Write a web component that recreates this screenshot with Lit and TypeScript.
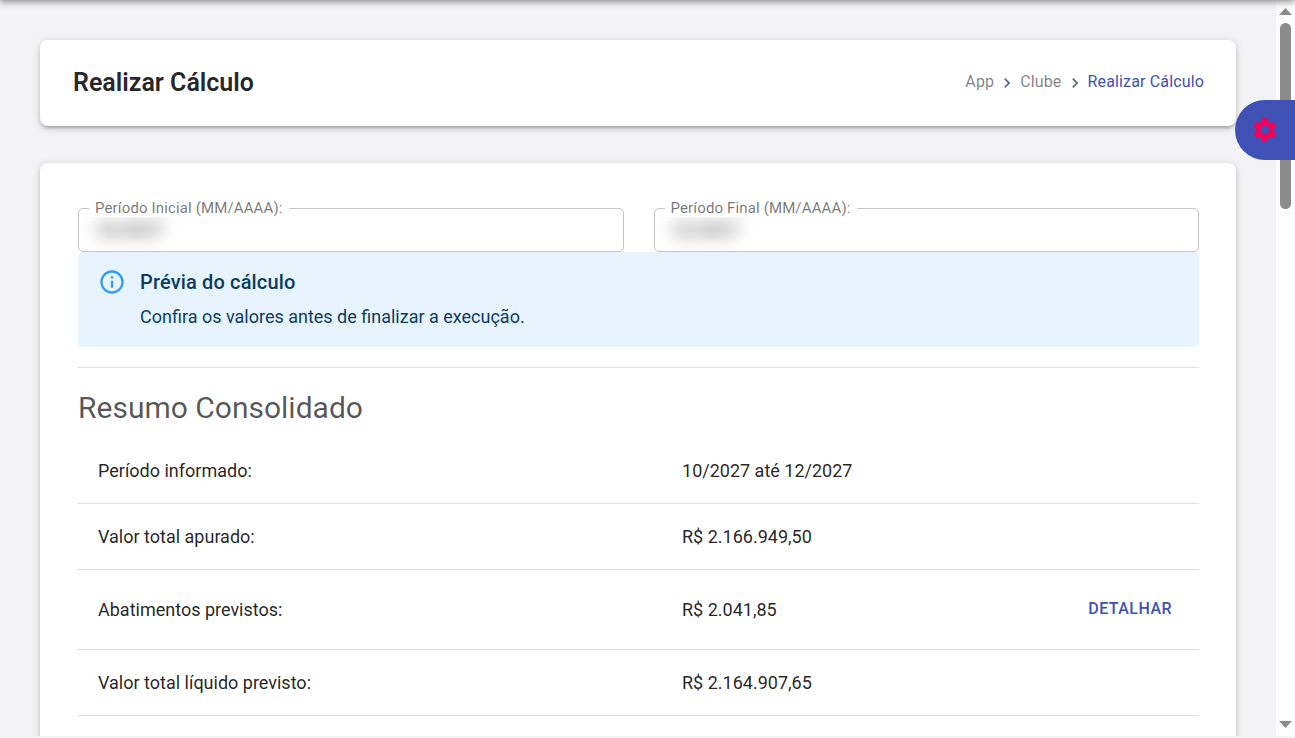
import { LitElement, html, css, nothing } from "lit";
import { customElement } from "lit/decorators.js";

interface SummaryRow {
  label: string;
  value: string;
  action?: string;
}

const ROWS: SummaryRow[] = [
  { label: "Período informado:", value: "10/2027 até 12/2027" },
  { label: "Valor total apurado:", value: "R$ 2.166.949,50" },
  { label: "Abatimentos previstos:", value: "R$ 2.041,85", action: "Detalhar" },
  { label: "Valor total líquido previsto:", value: "R$ 2.164.907,65" },
];

@customElement("app-root")
export class AppRoot extends LitElement {
  static styles = css`
    :host {
      display: block;
      position: relative;
      height: 100vh;
      overflow: hidden;
      box-sizing: border-box;
      padding-bottom: 2px;
      background: #f3f3f4;
      color: rgba(0, 0, 0, 0.87);
      font-family: Roboto, "Liberation Sans", sans-serif;
      font-size: 18px;
      line-height: 26px;
    }
    .topbar {
      position: absolute;
      left: 0;
      right: 0;
      bottom: 100%;
      height: 64px;
      z-index: 2;
      box-shadow: 0 2px 4px -1px rgba(0, 0, 0, 0.2), 0 4px 5px 0 rgba(0, 0, 0, 0.14),
        0 1px 10px 0 rgba(0, 0, 0, 0.12);
    }
    .shell {
      display: grid;
      grid-template-columns: minmax(0, 1fr) 19px;
      height: 100%;
    }
    .content {
      display: flex;
      flex-direction: column;
      gap: 37px;
      padding: 40px 40px 0;
      overflow: hidden;
      background: #f3f3f6;
    }
    .card {
      flex: none;
      background: #fff;
      border-radius: 8px;
      box-shadow: 0 3px 3px -2px rgba(0, 0, 0, 0.2), 0 3px 4px 0 rgba(0, 0, 0, 0.14),
        0 1px 8px 0 rgba(0, 0, 0, 0.12);
    }
    .header {
      display: flex;
      align-items: center;
      justify-content: space-between;
      padding: 28px 32px 28px 33px;
    }
    h1,
    h2,
    h3,
    p {
      margin: 0;
    }
    h1 {
      font-size: 25px;
      line-height: 30px;
      font-weight: 600;
    }
    .crumbs {
      display: flex;
      align-items: center;
      padding-bottom: 2px;
      font-size: 16px;
      line-height: 24px;
      letter-spacing: 0.00938em;
      gap: 3px;
    }
    .crumbs a {
      color: rgba(0, 0, 0, 0.5);
      text-decoration: none;
    }
    .crumbs .current {
      color: #3f51b5;
    }
    .crumbs svg {
      width: 20px;
      height: 20px;
      margin-top: 2px;
      fill: #5f6b72;
    }
    .panel {
      padding: 45px 37px 80px 38px;
    }
    .fields {
      display: grid;
      grid-template-columns: 1fr 1fr;
      gap: 30px;
    }
    .field {
      position: relative;
      display: flex;
      height: 42px;
      border: 1px solid #c4c4c4;
      border-radius: 5px;
    }
    .field label {
      position: absolute;
      z-index: 1;
      top: -10px;
      left: 10px;
      padding: 0 6px;
      background: #fff;
      color: rgba(0, 0, 0, 0.54);
      font-size: 15px;
      line-height: 18px;
      letter-spacing: 0.00938em;
    }
    .field input {
      flex: 1;
      min-width: 0;
      padding: 0 16px;
      border: 0;
      outline: 0;
      background: transparent;
      color: rgba(0, 0, 0, 0.87);
      font: inherit;
      filter: blur(8px);
    }
    .alert {
      display: flex;
      gap: 14px;
      padding: 17px 20px;
      background: #e7f3fd;
      border-radius: 5px;
      color: #0d3c61;
    }
    .alert svg {
      flex: none;
      width: 28px;
      height: 28px;
      margin-top: -1px;
      fill: #2f9bf4;
    }
    .alert h3 {
      font-size: 20px;
      line-height: 26px;
      font-weight: 500;
      letter-spacing: 0.0075em;
    }
    .alert p {
      margin-top: 9px;
    }
    .divider {
      height: 1px;
      margin: 20px 0;
      border: 0;
      background: #e0e0e0;
    }
    h2 {
      color: rgba(0, 0, 0, 0.66);
      font-size: 30px;
      line-height: 40px;
      font-weight: 400;
    }
    table {
      width: 100%;
      margin-top: 10px;
      border-collapse: separate;
      border-spacing: 0;
      table-layout: fixed;
    }
    .label-col {
      width: 52.1%;
    }
    .value-col {
      width: 30%;
    }
    th,
    td {
      height: 25px;
      padding: 20px;
      border-bottom: 1px solid #e0e0e0;
      font-weight: 400;
      line-height: 25px;
      text-align: left;
      vertical-align: middle;
    }
    .action {
      text-align: right;
      line-height: 0;
    }
    .text-button {
      padding: 5px 7px 7px;
      border: 0;
      border-radius: 4px;
      background: none;
      color: #3f51b5;
      font: 500 16px/27px Roboto, "Liberation Sans", sans-serif;
      letter-spacing: 0.02857em;
      text-transform: uppercase;
      vertical-align: middle;
      cursor: pointer;
    }
    .scrollbar {
      display: flex;
      flex-direction: column;
      align-items: center;
      padding: 8px 0;
      background: #fcfcfc;
    }
    .scrollbar svg {
      flex: none;
      width: 13px;
      height: 7px;
      fill: #8b8b8b;
    }
    .track {
      flex: 1;
      width: 11px;
      padding: 8px 0;
    }
    .thumb {
      height: 27%;
      border-radius: 6px;
      background: #8b8b8b;
    }
    .settings {
      position: absolute;
      z-index: 3;
      top: 100px;
      right: 0;
      display: flex;
      align-items: center;
      justify-content: center;
      width: 60px;
      height: 60px;
      padding: 0;
      border: 0;
      border-radius: 30px 0 0 30px;
      background: #3f51b5;
      cursor: pointer;
    }
    .settings svg {
      width: 28px;
      height: 28px;
      fill: #f50057;
    }
  `;

  private chevron() {
    return html`<svg viewBox="0 0 24 24" aria-hidden="true">
      <path d="M10 6L8.59 7.41 13.17 12l-4.58 4.59L10 18l6-6z" />
    </svg>`;
  }

  private field(id: string, label: string, value: string) {
    return html`<div class="field">
      <label for=${id}>${label}</label>
      <input id=${id} type="text" .value=${value} />
    </div>`;
  }

  render() {
    return html`
      <div class="topbar"></div>
      <div class="shell">
        <main class="content">
          <header class="card header">
            <h1>Realizar Cálculo</h1>
            <nav class="crumbs" aria-label="breadcrumb">
              <a href="#">App</a>${this.chevron()}<a href="#">Clube</a>${this.chevron()}<a class="current" href="#">Realizar Cálculo</a>
            </nav>
          </header>
          <section class="card panel">
            <div class="fields">
              ${this.field("inicio", "Período Inicial (MM/AAAA):", "10/2027")}
              ${this.field("fim", "Período Final (MM/AAAA):", "12/2027")}
            </div>
            <div class="alert" role="status">
              <svg viewBox="0 0 24 24" aria-hidden="true">
                <path d="M11 7h2v2h-2zm0 4h2v6h-2zM12 2C6.48 2 2 6.48 2 12s4.48 10 10 10 10-4.48 10-10S17.52 2 12 2zm0 18c-4.41 0-8-3.59-8-8s3.59-8 8-8 8 3.59 8 8-3.59 8-8 8z" />
              </svg>
              <div>
                <h3>Prévia do cálculo</h3>
                <p>Confira os valores antes de finalizar a execução.</p>
              </div>
            </div>
            <hr class="divider" />
            <h2>Resumo Consolidado</h2>
            <table>
              <colgroup>
                <col class="label-col" />
                <col class="value-col" />
                <col />
              </colgroup>
              <tbody>
                ${ROWS.map(
                  (row) => html`<tr>
                    <th scope="row">${row.label}</th>
                    <td>${row.value}</td>
                    <td class="action">
                      ${row.action ? html`<button class="text-button" type="button">${row.action}</button>` : nothing}
                    </td>
                  </tr>`
                )}
              </tbody>
            </table>
          </section>
        </main>
        <div class="scrollbar" aria-hidden="true">
          <svg viewBox="0 0 13 7"><path d="M0 7L6.5 0 13 7z" /></svg>
          <div class="track"><div class="thumb"></div></div>
          <svg viewBox="0 0 13 7"><path d="M0 0L6.5 7 13 0z" /></svg>
        </div>
      </div>
      <button class="settings" type="button" aria-label="Configurações">
        <svg viewBox="0 0 24 24" aria-hidden="true">
          <path d="M19.43 12.98c.04-.32.07-.64.07-.98s-.03-.66-.07-.98l2.11-1.65c.19-.15.24-.42.12-.64l-2-3.46c-.12-.22-.39-.3-.61-.22l-2.49 1c-.52-.4-1.08-.73-1.69-.98l-.38-2.65C14.46 2.18 14.25 2 14 2h-4c-.25 0-.46.18-.49.42l-.38 2.65c-.61.25-1.17.59-1.69.98l-2.49-1c-.23-.09-.49 0-.61.22l-2 3.46c-.13.22-.07.49.12.64l2.11 1.65c-.04.32-.07.65-.07.98s.03.66.07.98l-2.11 1.65c-.19.15-.24.42-.12.64l2 3.46c.12.22.39.3.61.22l2.49-1c.52.4 1.08.73 1.69.98l.38 2.65c.03.24.24.42.49.42h4c.25 0 .46-.18.49-.42l.38-2.65c.61-.25 1.17-.59 1.69-.98l2.49 1c.23.09.49 0 .61-.22l2-3.46c.12-.22.07-.49-.12-.64l-2.11-1.65zM12 15.75c-2.07 0-3.75-1.68-3.75-3.75s1.68-3.75 3.75-3.75 3.75 1.68 3.75 3.75-1.68 3.75-3.75 3.75z" />
        </svg>
      </button>
    `;
  }
}
